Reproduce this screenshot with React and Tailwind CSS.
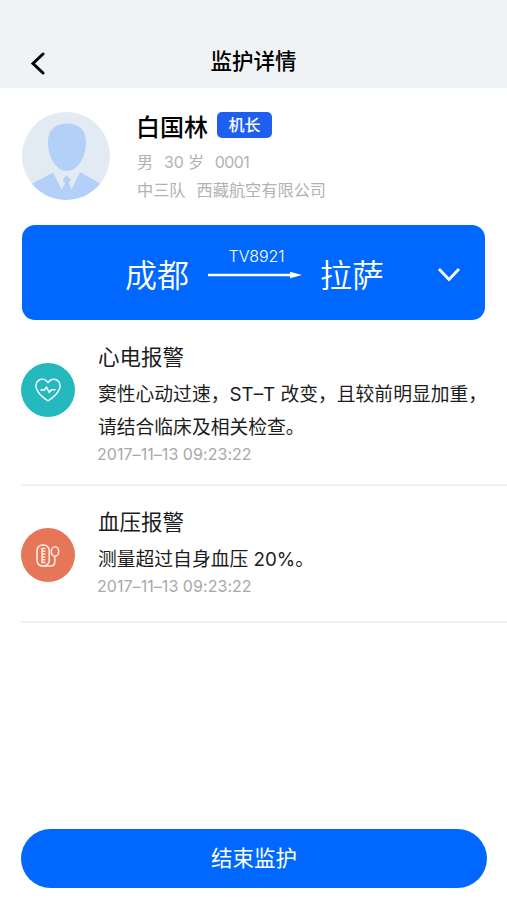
const HeartIcon = () => (
  <svg width="26" height="24" viewBox="0 0 26 24" fill="none" stroke="white" strokeWidth="1.500" strokeLinecap="round" strokeLinejoin="round">
    <path d="M13 22.800C10.500 21.300 4.500 16.500 2.200 12.400C.2 8.400 .8 4.200 4 2.200C7.300.2 11 1.400 13 4.700C15 1.400 18.700.2 22 2.200C25.200 4.200 25.800 8.400 23.800 12.400C21.500 16.500 15.500 21.300 13 22.800Z" />
    <path d="M6 12H9.500L11.500 9L14.200 14.500L16.200 11.800H20" />
  </svg>
);

const PressureIcon = () => (
  <svg width="24" height="23" viewBox="0 0 24 23" fill="none" stroke="#ffeee8" strokeWidth="1.500" strokeLinecap="round" strokeLinejoin="round">
    <rect x="1" y="1" width="12.200" height="21" rx="5.600" />
    <path d="M6 4.500V18.500M6 4.500H8.800M6 7.300H8.800M6 10.100H8.800M6 12.900H8.800M6 15.700H8.800M6 18.500H8.800" />
    <path d="M8 22H14.500C18 22 18.800 20.500 18.800 17.500V12.500" />
    <ellipse cx="19" cy="7.500" rx="3.700" ry="4.800" />
  </svg>
);

const Avatar = () => (
  <svg className="shrink-0" width="88" height="88" viewBox="0 0 88 88">
    <defs>
      <clipPath id="avatar-clip">
        <circle cx="44" cy="44" r="44" />
      </clipPath>
    </defs>
    <g clipPath="url(#avatar-clip)">
      <rect width="88" height="88" fill="#e2eaf3" />
      <path d="M45 11.500C57 11.500 64.500 18.500 64 31C63.500 46 55.500 59 45 59C34.500 59 26.500 46 26 31C25.500 18.500 33 11.500 45 11.500Z" fill="#b3d1f8" />
      <path d="M6 74L31 60.500L39.700 77.500L43 71L40.500 67.500L44.700 63.500L49 67.500L46.800 71L49.500 77.500L58 60L82 74V88H6Z" fill="#b3d1f8" />
    </g>
  </svg>
);

const alarms = [
  {
    title: "心电报警",
    lines: ["窦性心动过速，ST–T 改变，且较前明显加重，", "请结合临床及相关检查。"],
    time: "2017–11–13 09:23:22",
    color: "bg-[#24b8bf]",
    box: "h-[149px]",
    icon: <HeartIcon />,
  },
  {
    title: "血压报警",
    lines: ["测量超过自身血压 20%。"],
    time: "2017–11–13 09:23:22",
    color: "bg-[#e67658]",
    box: "mt-4 h-[121px]",
    icon: <PressureIcon />,
  },
];

const App = () => {
  return (
    <div className="flex h-[900px] w-[507px] flex-col overflow-hidden bg-white font-['Inter','Noto_Sans_CJK_SC',sans-serif] text-[#1c1c1c]">
      <header className="grid h-[88px] shrink-0 grid-cols-[1fr_auto_1fr] items-center bg-[#eff3f6] pt-[34px] text-black">
        <svg className="ml-[30px] mt-1" width="16" height="24" viewBox="0 0 16 24" fill="none" stroke="currentColor" strokeWidth="3" strokeLinecap="round">
          <path d="M13 3L3 12.500L13 22" />
        </svg>
        <h1 className="text-[21.500px] leading-[54px] font-medium">监护详情</h1>
      </header>

      <section className="mt-6 flex h-[88px] shrink-0 pl-[22px]">
        <Avatar />
        <div className="ml-[26px]">
          <div className="flex h-[28px] items-center text-black">
            <span className="mt-[3px] text-[24px] leading-[28px] font-medium">白国林</span>
            <span className="mb-0.5 ml-[9px] flex h-[26px] w-[55px] items-center justify-center rounded-[5px] bg-[#1f5ff0] text-[16px] leading-[26px] font-medium text-white">
              机长
            </span>
          </div>
          <div className="mt-2 flex h-[28px] items-center gap-[11px] pl-[1px] text-[16px] text-[#b2b2b2]">
            <span>男</span>
            <span className="tracking-[-0.2px]">30 岁</span>
            <span className="tracking-[-0.6px]">0001</span>
          </div>
          <div className="flex h-[28px] items-center gap-[11px] pl-[1px] text-[16.200px] text-[#b2b2b2]">
            <span>中三队</span>
            <span>西藏航空有限公司</span>
          </div>
        </div>
      </section>

      <section className="mt-[25px] ml-[22px] flex h-[95px] w-[463px] shrink-0 items-center rounded-[13px] bg-[#0068ff] pl-[103px] text-white">
        <span className="mt-[7px] w-[64px] text-[32px] leading-[48px] font-[350]">成都</span>
        <div className="mr-[18px] mb-[23px] ml-[19px] flex w-[94px] flex-col items-center">
          <span className="pl-[3px] text-[16px] leading-[24px] font-light tracking-[-0.1px]">TV8921</span>
          <svg className="mt-[3px]" width="94" height="8" viewBox="0 0 94 8">
            <path d="M0 2.800H82V.8L94 4L82 7.200V5.200H0Z" fill="white" />
          </svg>
        </div>
        <span className="mt-[7px] w-[64px] text-[32px] leading-[48px] font-[350]">拉萨</span>
        <svg className="mt-[5px] ml-[53px]" width="24" height="16" viewBox="0 0 24 16" fill="none" stroke="white" strokeWidth="2.800">
          <path d="M2 2L12 12.500L22 2" />
        </svg>
      </section>

      <section className="mt-[17px] shrink-0">
        {alarms.map((alarm) => (
          <div
            key={alarm.title}
            className={`ml-[21px] flex border-b-2 border-[#eef1f4] ${alarm.box}`}
          >
            <div className={`mt-[26px] flex size-[54px] shrink-0 items-center justify-center rounded-full ${alarm.color}`}>
              {alarm.icon}
            </div>
            <div className="ml-[22px] whitespace-nowrap">
              <h2 className="mt-[3px] pl-px text-[21.500px] leading-[34px]">{alarm.title}</h2>
              <div className="mt-1 pl-px">
                {alarm.lines.map((line) => (
                  <p key={line} className="text-[18.800px] leading-[33px]">
                    {line}
                  </p>
                ))}
              </div>
              <p className="-mt-px text-[16px] leading-[22px] tracking-[0.05px] text-[#a8a8a8]">{alarm.time}</p>
            </div>
          </div>
        ))}
      </section>

      <button className="mt-auto mb-3 ml-[21px] h-[59px] w-[466px] shrink-0 rounded-full bg-[#0068ff] text-[21.500px] text-white">
        结束监护
      </button>
    </div>
  );
};

export default App;
